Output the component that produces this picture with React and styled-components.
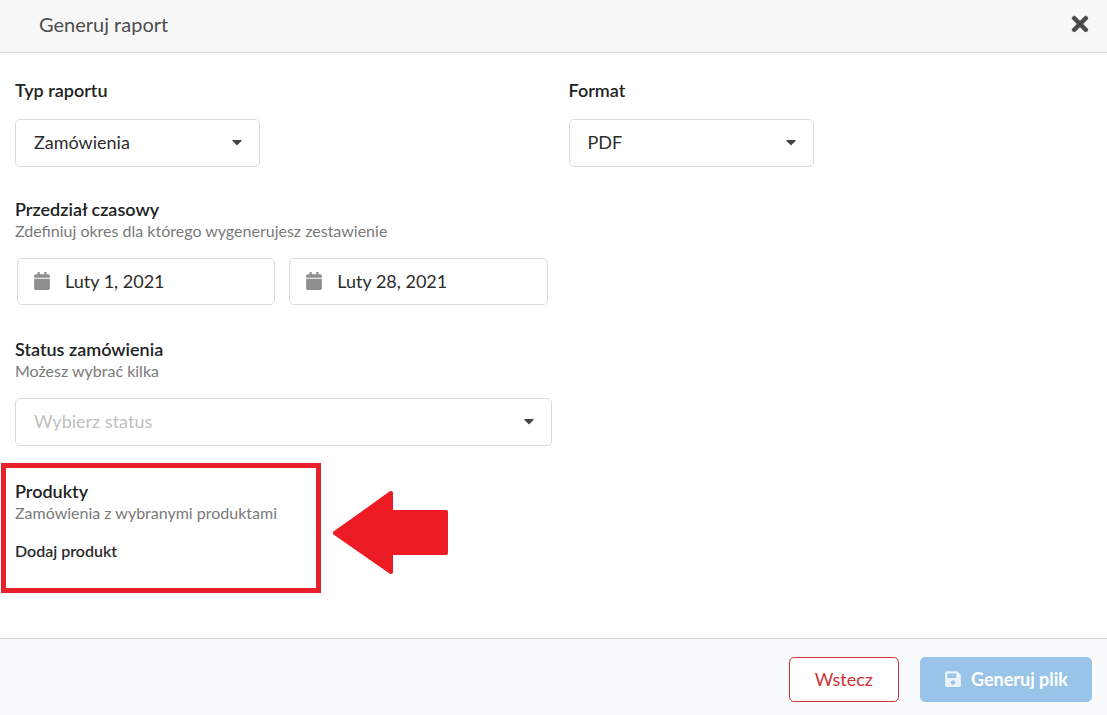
import React from "react";
import styled, { createGlobalStyle } from "styled-components";
import { FaCalendar, FaCaretDown, FaSave, FaTimes } from "react-icons/fa";

const GlobalStyle = createGlobalStyle`
  *, *::before, *::after { box-sizing: border-box; }
  body {
    margin: 0;
    background: #fff;
    color: #212223;
    font-family: Lato, "Liberation Sans", sans-serif;
  }
  button, input, select { font-family: inherit; }
`;

const Dialog = styled.div`
  display: flex;
  flex-direction: column;
  min-height: 100vh;
`;

const Header = styled.header`
  display: flex;
  align-items: center;
  justify-content: space-between;
  padding: 10px 15px 14px 39px;
  background: #f7f7f7;
  border-bottom: 1px solid #d8d8d8;
`;

const Title = styled.h1`
  margin: 0;
  font-size: 20px;
  font-weight: 400;
  line-height: 28px;
  color: #4d4d4d;
`;

const CloseButton = styled.button`
  display: flex;
  padding: 0;
  border: 0;
  background: none;
  color: #4a4a4a;
  font-size: 24px;
`;

const Form = styled.form`
  flex: 1;
  display: flex;
  flex-direction: column;
`;

const Fields = styled.div`
  flex: 1;
  display: flex;
  flex-direction: column;
  padding: 26px 0 24px;
`;

const Row = styled.div`
  display: grid;
  grid-template-columns: 1fr 1fr;
  margin-bottom: ${(p) => p.$gap}px;
`;

const Field = styled.div`
  padding: 0 2px 0 15px;
  min-width: 0;
`;

const Label = styled.label`
  display: block;
  margin-bottom: ${(p) => (p.$spaced ? 18 : 0)}px;
  font-size: 18px;
  font-weight: 600;
  line-height: 22px;
`;

const Hint = styled.p`
  margin: 0 0 16px;
  font-size: 16px;
  line-height: 22px;
  color: #7a7a7a;
`;

const SelectBox = styled.div`
  position: relative;
  max-width: ${(p) => (p.$wide ? "none" : "245px")};

  svg {
    position: absolute;
    top: 15px;
    right: 15px;
    font-size: 16px;
    color: #444;
    pointer-events: none;
  }
`;

const Select = styled.select`
  display: block;
  width: 100%;
  height: 48px;
  padding: 0 40px 2px 18px;
  appearance: none;
  border: 1px solid #d9dadb;
  border-radius: 5px;
  background: #fff;
  color: ${(p) => (p.$empty ? "#bfbfbf" : "#2c2c2c")};
  font-size: 18px;
`;

const Dates = styled.div`
  display: flex;
  gap: 14px;
  padding: 0 4px 0 2px;
`;

const DateBox = styled.label`
  flex: 1;
  min-width: 0;
  display: flex;
  align-items: center;
  gap: 14px;
  height: 47px;
  padding: 0 15px 2px;
  border: 1px solid #d9dadb;
  border-radius: 5px;

  svg {
    flex: none;
    font-size: 18px;
    color: #8e8e8e;
  }
`;

const DateInput = styled.input`
  flex: 1;
  min-width: 0;
  padding: 0;
  border: 0;
  background: none;
  color: #2c2c2c;
  font-size: 18px;
`;

const Products = styled.div`
  display: flex;
  align-items: center;
  gap: 12px;
  padding-left: 1px;
`;

const Highlight = styled.section`
  width: 320px;
  padding: 12px 9px 26px;
  border: 5px solid #e8202a;
`;

const Heading = styled.h2`
  margin: 0;
  font-size: 18px;
  font-weight: 600;
  line-height: 22px;
`;

const AddButton = styled.button`
  display: block;
  padding: 0;
  border: 0;
  background: none;
  color: #2c2c2c;
  font-size: 16px;
  font-weight: 600;
  line-height: 22px;
`;

const ArrowDrawing = styled.svg`
  flex: none;
  margin-top: 9px;
`;

const Footer = styled.footer`
  display: flex;
  justify-content: flex-end;
  gap: 21px;
  padding: 18px 15px 13px;
  border-top: 1px solid #d8d8d8;
  background: #f9fafc;
`;

const Button = styled.button`
  display: flex;
  align-items: center;
  gap: 9px;
  height: 45px;
  padding: 0 ${(p) => (p.$primary ? 23 : 25)}px 2px;
  border: 1px solid ${(p) => (p.$primary ? "#99c4e8" : "#ce3136")};
  border-radius: 5px;
  background: ${(p) => (p.$primary ? "#99c4e8" : "#fff")};
  color: ${(p) => (p.$primary ? "#fff" : "#ce3136")};
  font-size: 18px;
  font-weight: ${(p) => (p.$primary ? 700 : 400)};

  svg {
    font-size: 18px;
    opacity: 0.8;
  }
`;

function Dropdown({ id, wide, placeholder, options }) {
  return (
    <SelectBox $wide={wide}>
      <Select id={id} $empty={Boolean(placeholder)} defaultValue={placeholder ? "" : options[0]}>
        {placeholder && <option value="">{placeholder}</option>}
        {options.map((o) => (
          <option key={o}>{o}</option>
        ))}
      </Select>
      <FaCaretDown aria-hidden="true" />
    </SelectBox>
  );
}

function DateField({ id, label, value }) {
  return (
    <DateBox htmlFor={id}>
      <FaCalendar aria-hidden="true" />
      <DateInput id={id} aria-label={label} defaultValue={value} />
    </DateBox>
  );
}

function Arrow() {
  return (
    <ArrowDrawing width="115" height="83" viewBox="0 0 115 83" aria-hidden="true">
      <path
        d="M2 42 58 2V21H113V62H58V81Z"
        fill="#ed1c24"
        stroke="#ed1c24"
        strokeWidth="4"
        strokeLinejoin="round"
      />
    </ArrowDrawing>
  );
}

export default function App() {
  return (
    <>
      <GlobalStyle />
      <Dialog role="dialog" aria-labelledby="title">
        <Header>
          <Title id="title">Generuj raport</Title>
          <CloseButton type="button" aria-label="Zamknij">
            <FaTimes />
          </CloseButton>
        </Header>
        <Form onSubmit={(e) => e.preventDefault()}>
          <Fields>
            <Row $gap={31}>
              <Field>
                <Label htmlFor="type" $spaced>Typ raportu</Label>
                <Dropdown id="type" options={["Zamówienia"]} />
              </Field>
              <Field>
                <Label htmlFor="format" $spaced>Format</Label>
                <Dropdown id="format" options={["PDF"]} />
              </Field>
            </Row>
            <Row $gap={33}>
              <Field>
                <Label htmlFor="from">Przedział czasowy</Label>
                <Hint>Zdefiniuj okres dla którego wygenerujesz zestawienie</Hint>
                <Dates>
                  <DateField id="from" label="Od" value="Luty 1, 2021" />
                  <DateField id="to" label="Do" value="Luty 28, 2021" />
                </Dates>
              </Field>
            </Row>
            <Row $gap={17}>
              <Field>
                <Label htmlFor="status">Status zamówienia</Label>
                <Hint>Możesz wybrać kilka</Hint>
                <Dropdown id="status" wide placeholder="Wybierz status" options={[]} />
              </Field>
            </Row>
            <Products>
              <Highlight>
                <Heading>Produkty</Heading>
                <Hint>Zamówienia z wybranymi produktami</Hint>
                <AddButton type="button">Dodaj produkt</AddButton>
              </Highlight>
              <Arrow />
            </Products>
          </Fields>
          <Footer>
            <Button type="button">Wstecz</Button>
            <Button type="submit" $primary>
              <FaSave aria-hidden="true" />
              Generuj plik
            </Button>
          </Footer>
        </Form>
      </Dialog>
    </>
  );
}
